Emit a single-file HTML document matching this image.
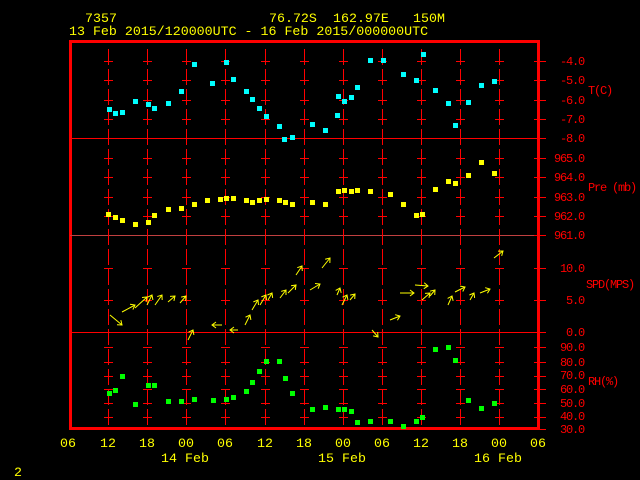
<!DOCTYPE html>
<html><head><meta charset="utf-8"><style>
html,body{margin:0;padding:0;background:#000;width:640px;height:480px;overflow:hidden}
svg{display:block}
text{font-family:"Liberation Mono","DejaVu Sans Mono",monospace;font-size:13.3px}
.r text{font-size:12px;letter-spacing:-1.2px}
</style></head><body>
<svg width="640" height="480" xmlns="http://www.w3.org/2000/svg">
<g fill="#ffff00">
<text x="85" y="22">7357</text>
<text x="269" y="22">76.72S</text>
<text x="333" y="22">162.97E</text>
<text x="413" y="22">150M</text>
<text x="69" y="35">13 Feb 2015/120000UTC - 16 Feb 2015/000000UTC</text>
<g text-anchor="middle">
<text x="68" y="447">06</text><text x="108" y="447">12</text><text x="147" y="447">18</text><text x="186" y="447">00</text><text x="225" y="447">06</text><text x="265" y="447">12</text><text x="304" y="447">18</text><text x="343" y="447">00</text><text x="382" y="447">06</text><text x="421" y="447">12</text><text x="460" y="447">18</text><text x="499" y="447">00</text><text x="538" y="447">06</text>
<text x="185" y="462">14 Feb</text><text x="342" y="462">15 Feb</text><text x="498" y="462">16 Feb</text>
</g>
<text x="14" y="476">2</text>
</g>
<g stroke="#ff0000" fill="none">
<rect x="70.5" y="41.5" width="468" height="387" stroke-width="3"/>
<line x1="70" y1="138.5" x2="545" y2="138.5"/>
<line x1="70" y1="235.5" x2="545" y2="235.5" stroke="#c04040"/>
<line x1="70" y1="332.5" x2="545" y2="332.5"/>
<g id="v" stroke-dasharray="16,4">
<line x1="108.5" y1="49" x2="108.5" y2="428"/><line x1="147.5" y1="49" x2="147.5" y2="428"/><line x1="186.5" y1="49" x2="186.5" y2="428"/><line x1="225.5" y1="49" x2="225.5" y2="428"/><line x1="265.5" y1="49" x2="265.5" y2="428"/><line x1="304.5" y1="49" x2="304.5" y2="428"/><line x1="343.5" y1="49" x2="343.5" y2="428"/><line x1="382.5" y1="49" x2="382.5" y2="428"/><line x1="421.5" y1="49" x2="421.5" y2="428"/><line x1="460.5" y1="49" x2="460.5" y2="428"/><line x1="499.5" y1="49" x2="499.5" y2="428"/>
</g>
</g>
<g id="ticks" stroke="#ff0000"></g>
<g class="r" fill="#ff0000" text-anchor="end">
<text x="584" y="65">-4.0</text><text x="584" y="84">-5.0</text><text x="584" y="104">-6.0</text><text x="584" y="123">-7.0</text><text x="584" y="142">-8.0</text>
<text x="584" y="162">965.0</text><text x="584" y="181">964.0</text><text x="584" y="201">963.0</text><text x="584" y="220">962.0</text><text x="584" y="239">961.0</text>
<text x="584" y="272">10.0</text><text x="584" y="304">5.0</text><text x="584" y="336">0.0</text>
<text x="584" y="351">90.0</text><text x="584" y="366">80.0</text><text x="584" y="379">70.0</text><text x="584" y="393">60.0</text><text x="584" y="407">50.0</text><text x="584" y="420">40.0</text><text x="584" y="433">30.0</text>
</g>
<g class="r" fill="#ff0000">
<text x="588" y="94">T(C)</text><text x="588" y="191">Pre (mb)</text><text x="586" y="288">SPD(MPS)</text><text x="588" y="385">RH(%)</text>
</g>
<g id="pts"></g>
<g id="wind" stroke="#ffff00" fill="none" stroke-width="1"></g>
<script>
var NS="http://www.w3.org/2000/svg";
function el(p,t,a){var e=document.createElementNS(NS,t);for(var k in a)e.setAttribute(k,a[k]);p.appendChild(e);return e;}
var tk=document.getElementById("ticks");
var xs=[108,147,186,225,265,304,343,382,421,460,499];
var ys=[61,80,100,119,158,177,197,216,268,300,347,362,376,389,403,417];
ys.forEach(function(y){xs.forEach(function(x){el(tk,"line",{x1:x-4,y1:y+.5,x2:x+5,y2:y+.5});});el(tk,"line",{x1:534,y1:y+.5,x2:546,y2:y+.5});});
[138,235,332,429].forEach(function(y){el(tk,"line",{x1:534,y1:y+.5,x2:546,y2:y+.5});});
var pts=document.getElementById("pts");
function P(c,a){a.forEach(function(p){el(pts,"rect",{x:p[0]-2,y:p[1]-2,width:5,height:5,fill:c});});}
P("#00ffff",[[109,109],[115,113],[122,112],[135,101],[148,104],[154,108],[168,103],[181,91],[194,64],[212,83],[226,62],[233,79],[246,91],[252,99],[259,108],[266,116],[279,126],[284,139],[292,137],[312,124],[325,130],[337,115],[338,96],[344,101],[351,97],[357,87],[370,60],[383,60],[403,74],[416,80],[423,54],[435,90],[448,103],[455,125],[468,102],[481,85],[494,81]]);
P("#ffff00",[[108,214],[115,217],[122,220],[135,224],[148,222],[154,215],[168,209],[181,208],[194,204],[207,200],[220,199],[226,198],[233,198],[246,200],[252,202],[259,200],[266,199],[279,200],[285,202],[292,204],[312,202],[325,204],[338,191],[344,190],[351,191],[357,190],[370,191],[390,194],[403,204],[416,215],[422,214],[435,189],[448,181],[455,183],[468,175],[481,162],[494,173]]);
P("#00ff00",[[109,393],[115,390],[122,376],[135,404],[148,385],[154,385],[168,401],[181,401],[194,399],[213,400],[226,399],[233,397],[246,391],[252,382],[259,371],[266,361],[279,361],[285,378],[292,393],[312,409],[325,407],[338,409],[344,409],[351,411],[357,422],[370,421],[390,421],[403,426],[416,421],[422,417],[435,349],[448,347],[455,360],[468,400],[481,408],[494,403]]);
var w=document.getElementById("wind");
var W=[[110,315,122,325],[122,312,135,305],[135,308,147,297],[147,305,152,295],[155,305,162,295],[168,302,175,296],[180,303,186,296],[188,340,193,330],[222,325,212,325],[238,330,230,330],[245,325,250,315],[252,310,258,300],[260,305,266,295],[268,300,272,293],[280,298,286,290],[288,293,296,285],[296,275,302,266],[310,290,320,284],[322,268,330,258],[337,295,340,288],[342,305,347,295],[350,300,355,294],[372,330,378,337],[390,320,400,316],[400,293,414,293],[415,285,428,286],[422,300,430,293],[430,296,435,290],[448,305,452,296],[455,292,465,287],[470,300,474,293],[480,293,490,289],[494,258,503,251]];
W.forEach(function(a){el(w,"line",{x1:a[0],y1:a[1],x2:a[2],y2:a[3]});var dx=a[2]-a[0],dy=a[3]-a[1],L=Math.sqrt(dx*dx+dy*dy);dx/=L;dy/=L;
el(w,"polyline",{points:(a[2]-4*dx-3*dy)+","+(a[3]-4*dy+3*dx)+" "+a[2]+","+a[3]+" "+(a[2]-4*dx+3*dy)+","+(a[3]-4*dy-3*dx)});});
</script>
</svg>
</body></html>
